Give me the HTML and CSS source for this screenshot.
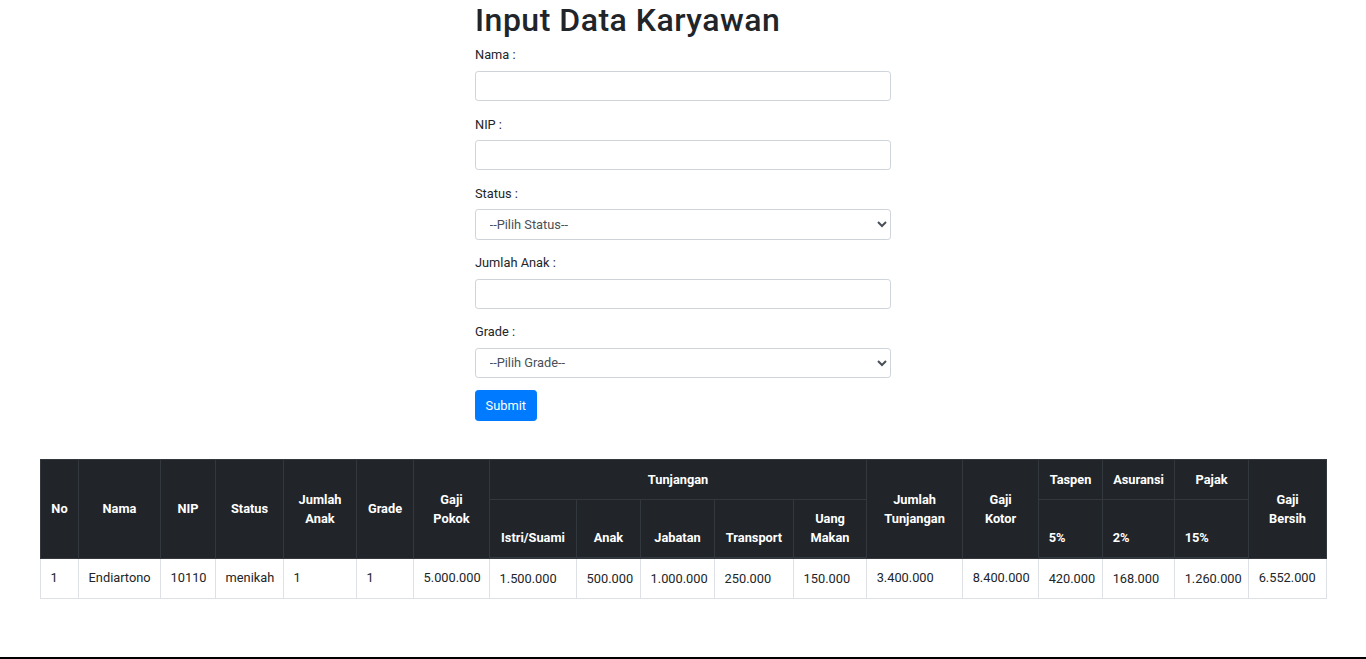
FILE: index.html
```html
<!DOCTYPE html>
<html lang="id">
<head>
<meta charset="utf-8">
<title>Input Data Karyawan</title>
<link rel="stylesheet" href="styles.css">
</head>
<body class="page">
<main class="content">
  <form class="form">
    <h1 class="title">Input Data Karyawan</h1>
    <div class="group">
      <label class="label" for="nama">Nama :</label>
      <input class="control" id="nama" type="text">
    </div>
    <div class="group">
      <label class="label" for="nip">NIP :</label>
      <input class="control" id="nip" type="text">
    </div>
    <div class="group">
      <label class="label" for="status">Status :</label>
      <select class="control select" id="status">
        <option>--Pilih Status--</option>
        <option>menikah</option>
        <option>belum menikah</option>
      </select>
    </div>
    <div class="group">
      <label class="label" for="anak">Jumlah Anak :</label>
      <input class="control" id="anak" type="text">
    </div>
    <div class="group">
      <label class="label" for="grade">Grade :</label>
      <select class="control select" id="grade">
        <option>--Pilih Grade--</option>
        <option>1</option>
        <option>2</option>
        <option>3</option>
      </select>
    </div>
    <button class="btn" type="button">Submit</button>
  </form>

  <div class="table-wrap">
    <table class="table">
      <colgroup>
        <col style="width:38px"><col style="width:82px"><col style="width:55px"><col style="width:68px">
        <col style="width:73px"><col style="width:57px"><col style="width:76px"><col style="width:87px">
        <col style="width:64px"><col style="width:74px"><col style="width:79px"><col style="width:73px">
        <col style="width:96px"><col style="width:76px"><col style="width:64px"><col style="width:72px">
        <col style="width:74px"><col style="width:78px">
      </colgroup>
      <thead>
        <tr>
          <th class="mid" rowspan="2">No</th>
          <th class="mid" rowspan="2">Nama</th>
          <th class="mid" rowspan="2">NIP</th>
          <th class="mid" rowspan="2">Status</th>
          <th class="mid" rowspan="2">Jumlah<br>Anak</th>
          <th class="mid" rowspan="2">Grade</th>
          <th class="mid" rowspan="2">Gaji<br>Pokok</th>
          <th class="mid" colspan="5">Tunjangan</th>
          <th class="mid" rowspan="2">Jumlah<br>Tunjangan</th>
          <th class="mid" rowspan="2">Gaji<br>Kotor</th>
          <th class="mid">Taspen</th>
          <th class="mid">Asuransi</th>
          <th class="mid">Pajak</th>
          <th class="mid" rowspan="2">Gaji<br>Bersih</th>
        </tr>
        <tr>
          <th>Istri/Suami</th>
          <th>Anak</th>
          <th>Jabatan</th>
          <th>Transport</th>
          <th>Uang<br>Makan</th>
          <th class="left">5%</th>
          <th class="left">2%</th>
          <th class="left">15%</th>
        </tr>
      </thead>
      <tbody>
        <tr>
          <td>1</td>
          <td>Endiartono</td>
          <td>10110</td>
          <td>menikah</td>
          <td>1</td>
          <td>1</td>
          <td>5.000.000</td>
          <td>1.500.000</td>
          <td>500.000</td>
          <td>1.000.000</td>
          <td>250.000</td>
          <td>150.000</td>
          <td>3.400.000</td>
          <td>8.400.000</td>
          <td>420.000</td>
          <td>168.000</td>
          <td>1.260.000</td>
          <td>6.552.000</td>
        </tr>
      </tbody>
    </table>
  </div>
</main>
<div class="bottom-bar"></div>
</body>
</html>
```

FILE: styles.css
```css
* {
  box-sizing: border-box;
}

.page {
  margin: 0;
  min-height: 100vh;
  display: flex;
  flex-direction: column;
  font-family: Roboto, "Liberation Sans", sans-serif;
  font-size: 12.8px;
  line-height: 1.5;
  color: #212529;
  background: #fff;
}

.content {
  display: flex;
  flex-direction: column;
}

.form {
  width: 416px;
  margin: 0 auto;
}

.title {
  margin: 0 0 6.4px;
  padding-top: 0.5px;
  font-size: 32px;
  line-height: 1.2;
  font-weight: 500;
  letter-spacing: 0.5px;
  color: #212529;
}

.group {
  margin-bottom: 13.25px;
}

.group:last-of-type {
  margin-bottom: 12px;
}

.label {
  display: inline-block;
  margin-bottom: 6.4px;
}

.control {
  display: block;
  width: 100%;
  height: 30.4px;
  padding: 4.8px 9.6px;
  font-family: inherit;
  font-size: 12.8px;
  line-height: 1.5;
  color: #495057;
  background: #fff;
  border: 1px solid #ced4da;
  border-radius: 3.2px;
  margin: 0;
}

.btn {
  display: inline-block;
  font-family: inherit;
  font-size: 12.8px;
  line-height: 1.5;
  padding: 4.8px 9.6px;
  color: #fff;
  background: #007bff;
  border: 1px solid #007bff;
  border-radius: 3.2px;
  margin: 0;
}

.table-wrap {
  padding: 0 40px;
  margin-top: 38.3px;
}

.table {
  width: 100%;
  border-collapse: collapse;
  table-layout: fixed;
  color: #212529;
}

.table th,
.table td {
  padding: 9.6px;
  line-height: 19.2px;
  border: 1px solid #dee2e6;
}

.table thead th {
  background: #212529;
  color: #fff;
  border-color: #32383e;
  font-weight: 700;
  text-align: center;
  vertical-align: bottom;
  white-space: nowrap;
}

.table thead tr:last-child th {
  border-bottom: 2px solid #32383e;
}

.table thead th.mid {
  vertical-align: middle;
}

.table thead th.left {
  text-align: left;
}

.table td {
  text-align: left;
  vertical-align: top;
  white-space: nowrap;
}

.bottom-bar {
  margin-top: auto;
  height: 2px;
  background: #000;
}
```
